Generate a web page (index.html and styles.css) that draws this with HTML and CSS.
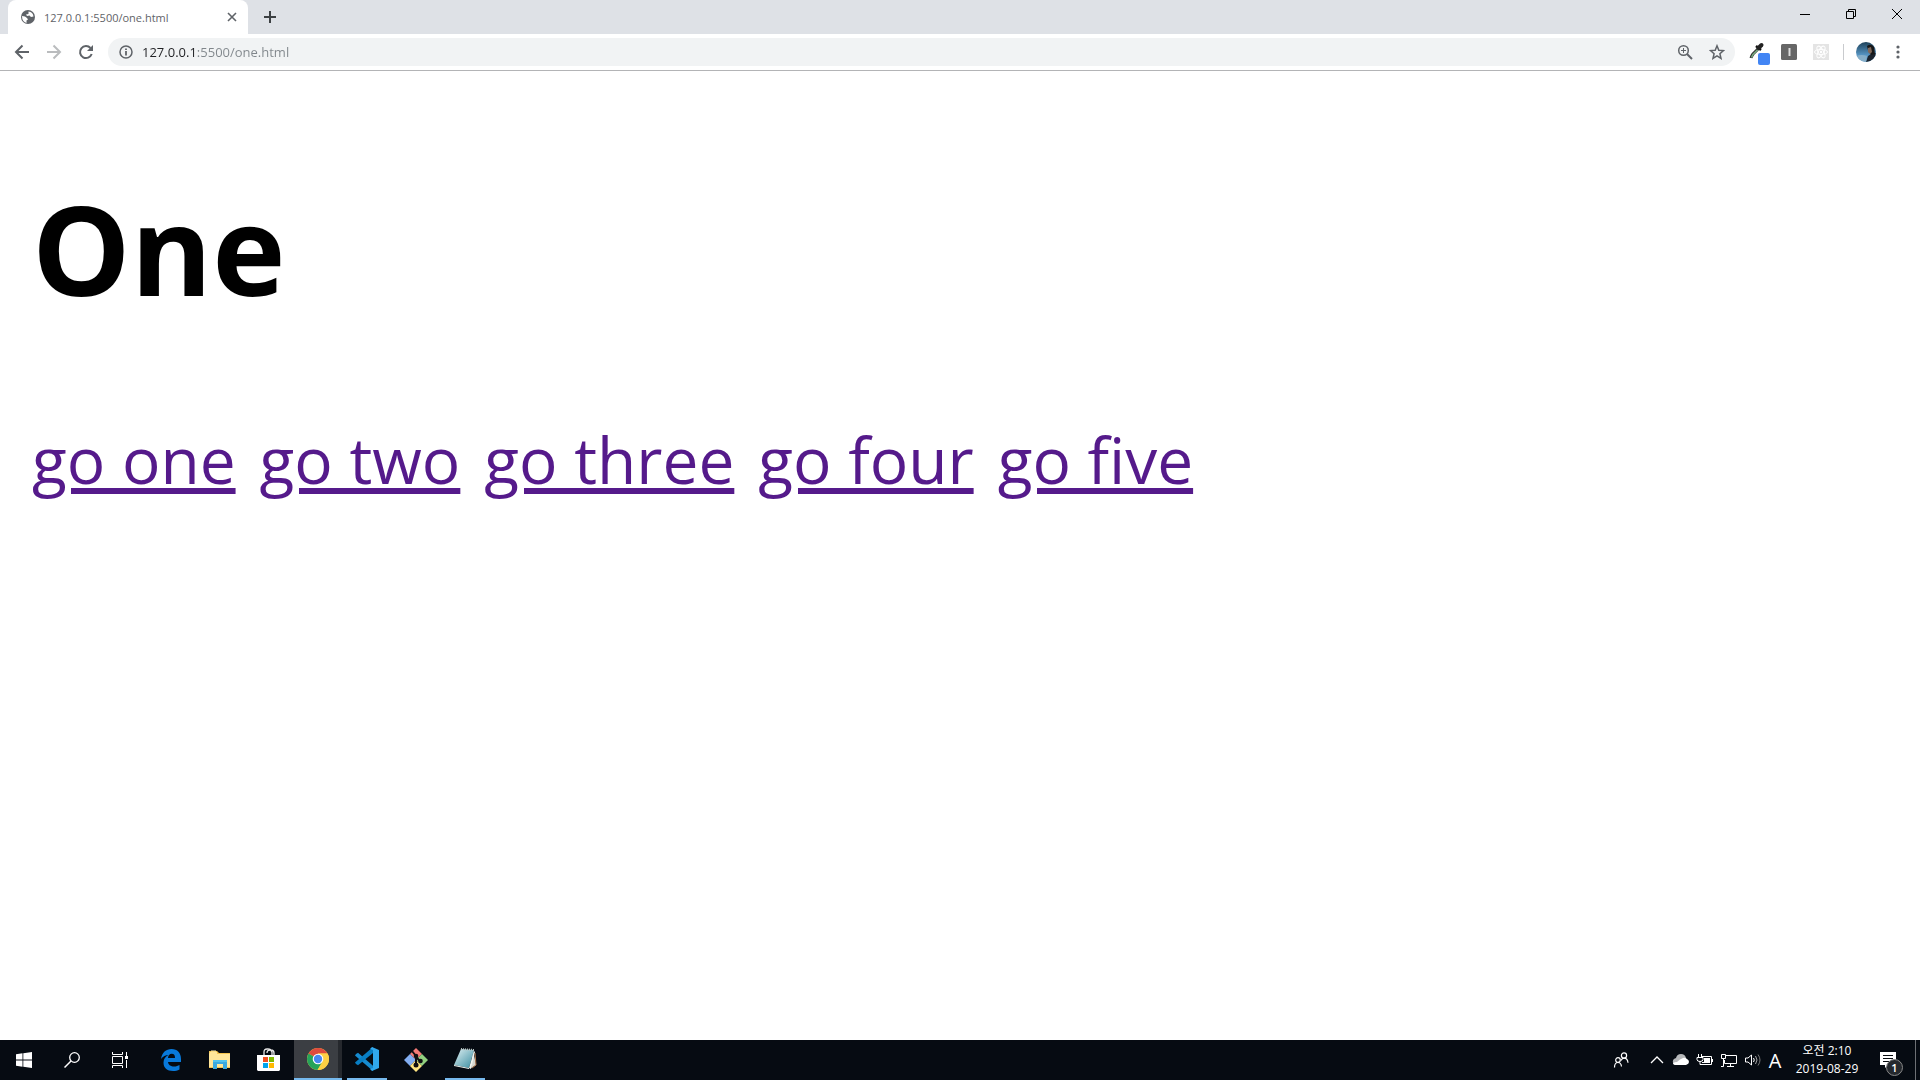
FILE: index.html
```html
<!DOCTYPE html>
<html lang="ko">
<head>
<meta charset="utf-8">
<title>127.0.0.1:5500/one.html</title>
<link rel="stylesheet" href="styles.css">
</head>
<body>

<header class="browser">
  <div class="tabstrip">
    <div class="tab">
      <svg width="16" height="16" viewBox="0 0 16 16"><circle cx="8" cy="8" r="7" fill="#5f6368"/><path d="M2 7l3 .5 2 1.500 1 1.500-1.500 1V14Q2 12.500 2 7zM8.500 2.500Q13 3 13.500 7.500L11 8 9.500 6.500 7 7 6 5.500l2.500-.5z" fill="#fff"/></svg>
      <span class="tab-title">127.0.0.1:5500/one.html</span>
      <button class="tab-close" aria-label="Close tab"><svg width="10" height="10" viewBox="0 0 10 10"><path d="M1 1l8 8M9 1L1 9" stroke="#5f6368" stroke-width="1.600"/></svg></button>
    </div>
    <button class="new-tab" aria-label="New tab"><svg width="12" height="12" viewBox="0 0 12 12"><path d="M6 0v12M0 6h12" stroke="#3c4043" stroke-width="2"/></svg></button>
    <div class="window-buttons">
      <button aria-label="Minimize"><svg width="10" height="10" viewBox="0 0 10 10"><path d="M0 5.500h10" stroke="#000"/></svg></button>
      <button aria-label="Restore"><svg width="10" height="10" viewBox="0 0 10 10"><path d="M.5 2.500h7v7h-7zM2.500 2.500v-2h7v7h-2" fill="none" stroke="#000"/></svg></button>
      <button aria-label="Close"><svg width="10" height="10" viewBox="0 0 10 10"><path d="M0 0l10 10M10 0L0 10" stroke="#000"/></svg></button>
    </div>
  </div>
  <div class="toolbar">
    <button class="tool" aria-label="Back"><svg width="16" height="16" viewBox="0 0 16 16"><path d="M15 8H2M8.500 1.500L2 8l6.500 6.500" fill="none" stroke="#5f6368" stroke-width="2"/></svg></button>
    <button class="tool" aria-label="Forward" disabled><svg width="16" height="16" viewBox="0 0 16 16"><path d="M1 8h13M7.500 1.500L14 8l-6.500 6.500" fill="none" stroke="#babcbe" stroke-width="2"/></svg></button>
    <button class="tool" aria-label="Reload"><svg width="16" height="16" viewBox="0 0 16 16"><path d="M13.700 10A6 6 0 1 1 12.500 4" fill="none" stroke="#5f6368" stroke-width="2"/><path d="M15 1v6H9z" fill="#5f6368"/></svg></button>
    <div class="omnibox">
      <svg width="16" height="16" viewBox="0 0 16 16"><circle cx="8" cy="8" r="6" fill="none" stroke="#5f6368" stroke-width="1.500"/><path d="M8 7v4.500M8 4.500v1.500" stroke="#5f6368" stroke-width="1.800"/></svg>
      <input class="address" type="text" aria-label="Address" value="127.0.0.1:5500/one.html">
      <button class="tool" aria-label="Zoom"><svg width="16" height="16" viewBox="0 0 16 16"><circle cx="6.500" cy="6.500" r="4.800" fill="none" stroke="#5f6368" stroke-width="1.500"/><path d="M10 10l5 5" stroke="#5f6368" stroke-width="2"/><path d="M4 6.500h5M6.500 4v5" stroke="#5f6368"/></svg></button>
      <button class="tool" aria-label="Bookmark"><svg width="16" height="16" viewBox="0 0 16 16"><path d="M8 1.800l1.800 4.400 4.700.4-3.600 3.100 1.100 4.600-4-2.500-4 2.500 1.100-4.600L1.500 6.600l4.700-.4z" fill="none" stroke="#5f6368" stroke-width="1.500"/></svg></button>
    </div>
    <div class="extensions">
      <button class="tool" aria-label="Color picker"><svg width="28" height="28" viewBox="-6 -4 28 28"><path d="M10 6L4 12q-1.500 2-2 4" fill="none" stroke="#333" stroke-width="3"/><path d="M9.500 7L4 12.500 2.500 15.500" fill="none" stroke="#78ad80" stroke-width="1.500"/><path d="M7 4l5 4" stroke="#111" stroke-width="2.500"/><path d="M9.500 6L12.500 3" stroke="#222" stroke-width="4" stroke-linecap="round"/><rect x="9" y="11" width="12" height="12" rx="2" fill="#4285f4"/></svg></button>
      <button class="tool" aria-label="Instant"><svg width="16" height="16" viewBox="0 0 16 16"><rect width="16" height="16" rx="1.500" fill="#666"/><path d="M8.500 4v8" stroke="#ddd" stroke-width="2"/></svg></button>
      <button class="tool" aria-label="React tools"><svg width="16" height="16" viewBox="0 0 16 16"><rect width="16" height="16" fill="#e4e4e4"/><g fill="none" stroke="#fff"><ellipse cx="8" cy="8" rx="6.500" ry="2.600"/><ellipse cx="8" cy="8" rx="6.500" ry="2.600" transform="rotate(60 8 8)"/><ellipse cx="8" cy="8" rx="6.500" ry="2.600" transform="rotate(120 8 8)"/></g><circle cx="8" cy="8" r="1.200" fill="#fff"/></svg></button>
    </div>
    <button class="profile" aria-label="Profile"><svg width="20" height="20" viewBox="0 0 20 20"><defs><clipPath id="face"><circle cx="10" cy="10" r="10"/></clipPath><linearGradient id="sky" x1="0" y1="0" x2="0" y2="1"><stop offset="0" stop-color="#1d4159"/><stop offset=".7" stop-color="#5b9bcb"/></linearGradient></defs><g clip-path="url(#face)"><path d="M0 0h20v20H0z" fill="url(#sky)"/><path d="M10 20l2-6 3-2 5-1v9z" fill="#1c242e"/><path d="M11 4q4-3 7 1l1 7-4 1-3-5z" fill="#171717"/><path d="M12 6l3-1 1 5-2 2-2-2z" fill="#81695b"/><path d="M0 14q6-2 11 0l-1 6H3z" fill="#86aec8"/></g></svg></button>
    <button class="menu" aria-label="Menu"><svg width="4" height="14" viewBox="0 0 4 14"><g fill="#5f6368"><circle cx="2" cy="2" r="1.600"/><circle cx="2" cy="7" r="1.600"/><circle cx="2" cy="12" r="1.600"/></g></svg></button>
  </div>
</header>

<main class="page">
  <h1>One</h1>
  <nav class="links">
    <a href="one.html">go one</a>
    <a href="two.html">go two</a>
    <a href="three.html">go three</a>
    <a href="four.html">go four</a>
    <a href="five.html">go five</a>
  </nav>
</main>

<footer class="taskbar">
  <div class="system">
    <button aria-label="Start"><svg width="16" height="16" viewBox="0 0 16 16"><path d="M0 2.300L6.500 1.300v6.200H0zM7.300 1.200L16 0v7.500H7.300zM0 8.400h6.500v6.300L0 13.800zM7.300 8.400H16V16l-8.700-1.200z" fill="#fff"/></svg></button>
    <button aria-label="Search"><svg width="16" height="16" viewBox="0 0 16 16"><circle cx="10.500" cy="5.500" r="4.800" fill="none" stroke="#fff" stroke-width="1.300"/><path d="M7 9l-6.500 6.500" stroke="#fff" stroke-width="1.500"/></svg></button>
    <button aria-label="Task view"><svg width="16" height="16" viewBox="0 0 16 16"><path d="M.5 0v2.500h10V0M.5 16v-2.500h10V16M.5 4.500h10v7H.5zM14.500 0v4M14.500 8v8" fill="none" stroke="#fff"/><path d="M13 4h3v3h-3z" fill="#fff"/></svg></button>
  </div>
  <div class="apps">
    <button aria-label="Edge"><svg width="22" height="22" viewBox="0 0 22 22"><path d="M1 10C2 3.500 6 0 11.500 0 17.500 0 21 4 21 10v3H8c.3 3 3 4.500 6 4.500 2.300 0 4-.6 5.500-1.500v4.500c-2 1-4 1.500-6.500 1.500-6 0-9.500-3-9.500-8.500C3.500 10 5.500 7.500 8.500 6 5.500 6 3 7.500 1 10zM8 9h7c0-3-1-4.300-3.200-4.300C9.500 4.700 8.200 6.500 8 9z" fill="#0879da"/></svg></button>
    <button aria-label="File Explorer"><svg width="22" height="20" viewBox="0 0 22 20"><path d="M0 1h8l2 2h11v15H0z" fill="#f4c44e"/><path d="M1 2h7v2h13v13H0V4z" fill="#ffe69a"/><path d="M2 1h5" stroke="#fff3b8"/><path d="M4 19v-9h14v9h-4v-5H8v5z" fill="#3aa9df"/><path d="M4 11h14" stroke="#51c3ee" stroke-width="2"/></svg></button>
    <button aria-label="Store"><svg width="24" height="24" viewBox="0 0 24 24"><path d="M7 8V4q0-3 3-3h1q3 0 4 3v4M10 5q0-3 3-3h1q3 0 3 3v3" fill="none" stroke="#e8e8e8" stroke-width="1.300"/><path d="M0 7h23v15l-1 1H1l-1-1z" fill="#fff"/><path d="M6 9h5v5H6z" fill="#f25022"/><path d="M12 9h5v5h-5z" fill="#7fba00"/><path d="M6 15h5v5H6z" fill="#00a4ef"/><path d="M12 15h5v5h-5z" fill="#ffb900"/></svg></button>
    <button class="active" aria-label="Chrome"><svg width="22" height="22" viewBox="0 0 22 22"><circle cx="11" cy="11" r="11" fill="#fdd044"/><path d="M11 11L1.500 5.500A11 11 0 0 1 20.500 5.500H11z" fill="#dd4b3e"/><path d="M11 11L1.500 5.500A11 11 0 0 0 10.500 22l5-8.500z" fill="#25a35a"/><path d="M11 5.500h9.500A11 11 0 0 1 10.500 22l5.200-8.500z" fill="#fdd044"/><circle cx="11" cy="11" r="5.300" fill="#fff"/><circle cx="11" cy="11" r="4.200" fill="#4688f1"/></svg></button>
    <button class="running" aria-label="Visual Studio Code"><svg width="24" height="24" viewBox="0 0 24 24"><path d="M1 7l2-1.200 15 13V24L0 8.500z" fill="#168bd0"/><path d="M0 15.500L18 0v6L3 18.200 1 17z" fill="#087ec3"/><path d="M17 0l7 3v18l-7 3-2-2 3-1V3l-3-1z" fill="#31a8ed"/></svg></button>
    <button aria-label="Git"><svg width="24" height="24" viewBox="0 0 24 24"><path d="M12 0l6 6-6 6-6-6z" fill="#f47b76"/><path d="M6 6l6 6-6 6-6-6z" fill="#82aef2"/><path d="M18 6l6 6-6 6-6-6z" fill="#91d17f"/><path d="M12 12l6 6-6 6-6-6z" fill="#ffe681"/><path d="M8 3l4 5v9M12 9l4 4" fill="none" stroke="#100f12" stroke-width="2"/><circle cx="12" cy="8" r="2.300" fill="#100f12"/><circle cx="12" cy="17" r="2.500" fill="#100f12"/><circle cx="16.500" cy="13" r="2.300" fill="#100f12"/></svg></button>
    <button class="running" aria-label="Notepad"><svg width="24" height="24" viewBox="0 0 24 24"><defs><linearGradient id="paper" x1="0" y1="0" x2="1" y2="1"><stop offset="0" stop-color="#e0f1f3"/><stop offset="1" stop-color="#388ca0"/></linearGradient></defs><path d="M20 3l3 15-5 3z" fill="#d6d6cf"/><path d="M8 2l13 1-5 18L1 18z" fill="url(#paper)"/><path d="M1 18l15 3v1L1 19zM16 21l5-17 1 1-4 17z" fill="#eef3ef"/><path d="M8 2l13 1" stroke="#b7c3c1" stroke-width="2" stroke-dasharray="1 1"/><path d="M22 6l1 12-4 3" fill="none" stroke="#b17b51"/></svg></button>
  </div>
  <div class="tray">
    <button class="people" aria-label="People"><svg width="16" height="16" viewBox="0 0 16 16"><g fill="none" stroke="#fff" stroke-width="1.200"><circle cx="5" cy="8" r="2.300"/><circle cx="11" cy="3.500" r="2.600"/><path d="M1.500 15.500q0-5 3.500-5 3 0 3.500 4M8 8.500q1-2.300 3-2.300 3.500 0 4 4.500"/></g></svg></button>
    <button aria-label="Show hidden icons"><svg width="14" height="8" viewBox="0 0 14 8"><path d="M1 7l6-6 6 6" fill="none" stroke="#fff" stroke-width="1.300"/></svg></button>
    <button aria-label="OneDrive"><svg width="18" height="12" viewBox="0 0 18 12"><path d="M1 9q-1-4 3-5 1-4 5-4 4 0 5 4L9 9z" fill="#b6b8ba"/><path d="M4 11q-3 0-3-2 2-1 4-1 3-3 6-4 2-1 4 1 2 1 2 3t-3 3z" fill="#fff"/></svg></button>
    <button aria-label="Battery"><svg width="18" height="14" viewBox="0 0 18 14"><path d="M2.500 1v3M5.500 1v3M1 4.500h6v2q0 2-3 2-3 0-3-2zM4 8v3.500h3" fill="none" stroke="#fff"/><path d="M6 3.500h9.500v8H6M16.500 6v3" fill="none" stroke="#fff"/><path d="M8 5h6v5H6V9h2z" fill="#fff"/></svg></button>
    <button aria-label="Network"><svg width="18" height="16" viewBox="0 0 18 16"><path d="M6 3.500h10.500v8H4.500V8M10.500 11.500v3M7 14.500h7M1.500 2.500h4v4h-4zM3.500 6.500v8H1" fill="none" stroke="#fff"/></svg></button>
    <button aria-label="Volume"><svg width="18" height="14" viewBox="0 0 18 14"><path d="M1.500 5v4H4l3.500 3V2L4 5z" fill="none" stroke="#fff"/><path d="M9.500 5q1.500 2 0 4" fill="none" stroke="#fff"/><path d="M11.500 3q3 4 0 8" fill="none" stroke="#aaa"/><path d="M14 1.500q4 5.500 0 11" fill="none" stroke="#777"/></svg></button>
    <button class="ime">A</button>
    <button class="clock"><span>오전 2:10</span><span>2019-08-29</span></button>
    <button class="notices" aria-label="1 notification"><svg width="16" height="16" viewBox="0 0 16 16"><path d="M0 0h16v13H8l-3 3v-3H0z" fill="#fff"/><path d="M3 3.500h10M3 6.500h10M3 9.500h6" stroke="#070b10"/></svg><span class="badge">1</span></button>
    <button class="show-desktop" aria-label="Show desktop"></button>
  </div>
</footer>

</body>
</html>
```
FILE: styles.css
```css
* {
    box-sizing: border-box;
}
body {
    margin: 0;
    min-height: 100vh;
    display: flex;
    flex-direction: column;
    background: #fff;
    font-family: "Open Sans", "Noto Sans CJK KR", sans-serif;
}
svg {
    display: block;
    flex: none;
}
button {
    display: flex;
    align-items: center;
    justify-content: center;
    padding: 0;
    border: 0;
    background: none;
    color: inherit;
    font: inherit;
}

/* browser */
.tabstrip {
    display: flex;
    height: 34px;
    padding-left: 8px;
    background: #dee1e6;
}
.tab {
    display: flex;
    align-items: center;
    width: 240px;
    padding: 0 8px 0 12px;
    border-radius: 8px 8px 0 0;
    background: #fff;
    color: #5f6368;
    font-size: 11px;
}
.tab-title {
    flex: 1;
    padding-left: 8px;
}
.tab-close {
    width: 16px;
    height: 16px;
}
.new-tab {
    width: 44px;
}
.window-buttons {
    display: flex;
    height: 28px;
    margin-left: auto;
}
.window-buttons button {
    width: 46px;
}
.toolbar {
    display: flex;
    align-items: center;
    height: 37px;
    padding: 0 12px 0 6px;
    border-bottom: 1px solid #b3b4b6;
    background: #fff;
}
.tool {
    width: 32px;
    height: 28px;
}
.omnibox {
    display: flex;
    align-items: center;
    flex: 1;
    height: 28px;
    margin: 0 6px;
    padding: 0 2px 0 10px;
    border-radius: 14px;
    background: #f1f3f4;
}
/* host part dark, port and path grey */
.address {
    flex: 1;
    height: 28px;
    margin-left: 8px;
    padding: 0;
    border: 0;
    outline: 0;
    background: linear-gradient(90deg, #202124 54px, #80868b 54px);
    -webkit-background-clip: text;
    background-clip: text;
    color: transparent;
    font: 13px "Open Sans", sans-serif;
}
.extensions {
    display: flex;
    padding-right: 6px;
}
.profile {
    height: 16px;
    padding-left: 12px;
    border-left: 1px solid #c9cbce;
}
.menu {
    width: 20px;
    height: 28px;
    margin-left: 12px;
}

/* page */
.page {
    flex: 1;
    padding: 0 32px;
}
h1 {
    margin: 92px 0 85px;
    font-size: 124px;
    font-weight: bold;
    line-height: 170px;
}
.links {
    display: flex;
    flex-wrap: wrap;
    gap: 0 24px;
    font-size: 64px;
    line-height: 84px;
}
.links a {
    color: #551a8b;
}

/* taskbar */
.taskbar {
    display: flex;
    justify-content: space-between;
    height: 40px;
    background: #060b12;
    color: #fff;
    font-size: 12px;
}
.system, .apps, .tray {
    display: flex;
}
.system button, .apps button {
    width: 48px;
}
.apps {
    flex: 1;
    gap: 1px;
    padding-left: 3px;
}
.apps .active {
    border-bottom: 2px solid #76b9ed;
    background: linear-gradient(90deg, #3b3e43 44px, #25282d 44px);
}
.apps .running {
    width: 40px;
    margin: 0 4px;
    border-bottom: 2px solid #76b9ed;
}
.tray button {
    width: 24px;
}
.tray .people {
    width: 48px;
}
.tray .ime {
    width: 20px;
    font-size: 20px;
}
.tray .clock {
    flex-direction: column;
    width: 84px;
    line-height: 18px;
}
.tray .notices {
    position: relative;
    width: 38px;
}
.badge {
    position: absolute;
    right: 4px;
    bottom: 4px;
    width: 17px;
    height: 17px;
    border: 1px solid #888;
    border-radius: 50%;
    background: #24282d;
    font-size: 11px;
    font-weight: 600;
    line-height: 15px;
}
.tray .show-desktop {
    width: 5px;
    margin-left: 8px;
    border-left: 1px solid #6d7074;
}
```
